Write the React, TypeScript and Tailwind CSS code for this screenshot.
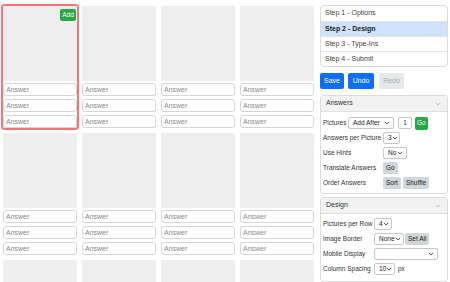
import { ChevronDown } from "lucide-react";

const font = { fontFamily: '"Liberation Sans", Arial, sans-serif' };

function Caret() {
	return (
		<svg width="6" height="4" viewBox="0 0 6 4" className="shrink-0">
			<path d="M0.8 0.8 L3 3 L5.2 0.8" fill="none" stroke="#444" strokeWidth="0.9" />
		</svg>
	);
}

function Select({ value, w }: { value: string; w: string }) {
	return (
		<div
			className={`flex h-[12px] items-center justify-between rounded-[2px] border border-[#c8c8c8] bg-white pl-[4px] pr-[3px] text-[6.5px] text-[#222] ${w}`}
		>
			<span>{value}</span>
			<Caret />
		</div>
	);
}

function GrayBtn({ label }: { label: string }) {
	return (
		<button
			type="button"
			className="flex h-[12px] items-center rounded-[2px] bg-[#d2d5d9] px-[3px] text-[6.5px] text-[#222]"
		>
			{label}
		</button>
	);
}

function Card({ selected }: { selected?: boolean }) {
	return (
		<div
			className={`relative h-[126px] rounded-[4px] border-2 ${
				selected ? "border-[#f87474]" : "border-transparent"
			}`}
		>
			<div className="h-[75px] bg-[#eeeeee]" />
			{selected && (
				<button
					type="button"
					className="absolute right-[1px] top-[3px] flex h-[12px] w-[16px] items-center justify-center rounded-[2px] bg-[#28a745] text-[6.5px] text-white"
				>
					Add
				</button>
			)}
			<div className="mt-[2px] flex flex-col gap-[3px]">
				{[0, 1, 2].map((i) => (
					<input
						key={i}
						placeholder="Answer"
						className="h-[13px] w-full rounded-[3px] border border-[#d6d6d6] bg-white px-[2px] text-[7px] outline-none placeholder:text-[#8a8a8a]"
						style={font}
					/>
				))}
			</div>
		</div>
	);
}

function Panel({ title, children }: { title: string; children: React.ReactNode }) {
	return (
		<div className="rounded-[3px] border border-[#dcdcdc]">
			<div className="flex h-[16px] items-center justify-between border-b border-[#e2e2e2] bg-[#f2f2f2] pl-[5px] pr-[5px] text-[7px] text-[#333]">
				<span>{title}</span>
				<ChevronDown size={8} strokeWidth={1.5} color="#999" />
			</div>
			{children}
		</div>
	);
}

export default function App() {
	const steps = ["Step 1 - Options", "Step 2 - Design", "Step 3 - Type-Ins", "Step 4 - Submit"];

	return (
		<div className="flex h-[282px] w-[450px] overflow-hidden bg-white" style={font}>
			{/* picture grid */}
			<div className="grid w-[316px] shrink-0 grid-cols-[repeat(4,78px)] content-start gap-px pl-px pt-[4px]">
				{Array.from({ length: 12 }).map((_, i) => (
					<Card key={i} selected={i === 0} />
				))}
			</div>

			{/* side panel */}
			<div className="ml-[4px] flex w-[128px] shrink-0 flex-col pt-[5px]">
				<div className="overflow-hidden rounded-[4px] border border-[#dcdcdc]">
					{steps.map((s, i) => (
						<div
							key={s}
							className={`flex h-[15px] items-center pl-[4px] text-[7px] ${
								i > 0 ? "border-t border-[#e2e2e2]" : ""
							} ${i === 1 ? "bg-[#cfe2ff] font-bold text-[#222]" : "text-[#444]"}`}
						>
							{s}
						</div>
					))}
				</div>

				<div className="mt-[6px] flex gap-[4px]">
					<button type="button" className="h-[16px] w-[24px] rounded-[2px] bg-[#0d6efd] text-[7px] text-white">
						Save
					</button>
					<button type="button" className="h-[16px] w-[26px] rounded-[2px] bg-[#0d6efd] text-[7px] text-white">
						Undo
					</button>
					<button type="button" className="ml-px h-[16px] w-[25px] rounded-[2px] bg-[#e6e8eb] text-[7px] text-[#a9adb2]">
						Redo
					</button>
				</div>

				<div className="mt-[6px]">
					<Panel title="Answers">
						<div className="flex flex-col gap-[3px] px-[2px] pb-[4px] pt-[5px] text-[6.5px] text-[#333]">
							<div className="flex h-[12px] items-center">
								<span className="w-[25px]">Pictures</span>
								<Select value="Add After" w="w-[46px]" />
								<div className="ml-[4px] flex h-[12px] w-[14px] items-center justify-center rounded-[2px] border border-[#c8c8c8] text-[6.5px]">
									1
								</div>
								<button
									type="button"
									className="ml-[3px] flex h-[13px] items-center rounded-[2px] bg-[#28a745] px-[2px] text-[6.5px] text-white"
								>
									Go
								</button>
							</div>
							<div className="flex h-[12px] items-center">
								<span className="w-[60px]">Answers per Picture</span>
								<Select value="3" w="w-[17px]" />
							</div>
							<div className="flex h-[12px] items-center">
								<span className="w-[60px]">Use Hints</span>
								<Select value="No" w="w-[24px]" />
							</div>
							<div className="flex h-[12px] items-center">
								<span className="w-[60px]">Translate Answers</span>
								<GrayBtn label="Go" />
							</div>
							<div className="flex h-[12px] items-center gap-[2px]">
								<span className="w-[58px]">Order Answers</span>
								<GrayBtn label="Sort" />
								<GrayBtn label="Shuffle" />
							</div>
						</div>
					</Panel>
				</div>

				<div className="mt-[3px]">
					<Panel title="Design">
						<div className="flex flex-col gap-[3px] px-[2px] pb-[6px] pt-[4px] text-[6.5px] text-[#333]">
							<div className="flex h-[12px] items-center">
								<span className="w-[51px]">Pictures per Row</span>
								<Select value="4" w="w-[18px]" />
							</div>
							<div className="flex h-[12px] items-center gap-px">
								<span className="w-[50px]">Image Border</span>
								<Select value="None" w="w-[30px]" />
								<GrayBtn label="Set All" />
							</div>
							<div className="flex h-[12px] items-center">
								<span className="w-[51px]">Mobile Display</span>
								<Select value="" w="w-[64px]" />
							</div>
							<div className="flex h-[12px] items-center">
								<span className="w-[51px]">Column Spacing</span>
								<Select value="10" w="w-[21px]" />
								<span className="ml-[3px]">px</span>
							</div>
						</div>
					</Panel>
				</div>
			</div>
		</div>
	);
}
